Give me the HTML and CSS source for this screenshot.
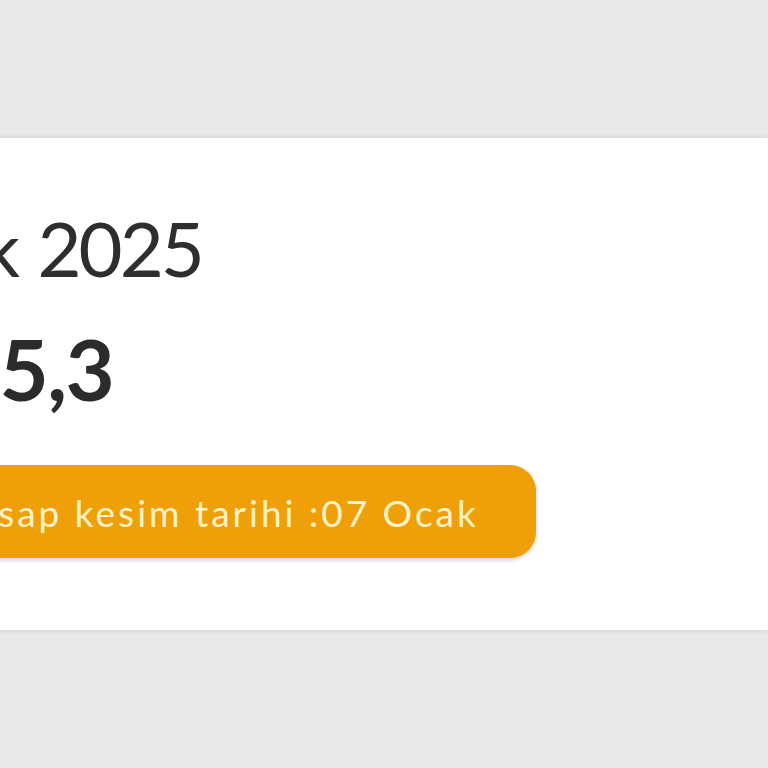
FILE: index.html
```html
<!DOCTYPE html>
<html lang="tr">
<head>
<meta charset="utf-8">
<link rel="stylesheet" href="styles.css">
</head>
<body>
  <div class="page">
    <section class="card">
      <div class="period">Ocak 2025</div>
      <div class="amount">1255,3</div>
      <div class="badge">Hesap kesim tarihi :07 Ocak</div>
    </section>
  </div>
</body>
</html>
```

FILE: styles.css
```css
html, body {
  margin: 0;
  padding: 0;
  background: #e9e9e9;
  font-family: "Lato", "Noto Sans", sans-serif;
  overflow: hidden;
}
.page {
  width: 768px;
  height: 768px;
  padding-top: 138px;
  box-sizing: border-box;
}
.card {
  margin-left: -144px;
  width: 912px;
  height: 492px;
  background: #ffffff;
  box-shadow: 0 0 6px rgba(0,0,0,0.12);
  box-sizing: border-box;
  padding-top: 72px;
  display: flex;
  flex-direction: column;
  align-items: flex-start;
}
.period {
  font-size: 76px;
  line-height: 76px;
  color: #2e2e2e;
  font-weight: 400;
  letter-spacing: -3px;
  word-spacing: 4px;
}
.amount {
  margin-top: 39px;
  margin-left: 0;
  font-size: 85px;
  line-height: 86px;
  color: #2b2b2b;
  font-weight: 700;
  letter-spacing: -1.5px;
}
.badge {
  margin-top: 54px;
  height: 93px;
  box-sizing: border-box;
  padding: 2px 57px 0 89px;
  display: flex;
  align-items: center;
  background: #ef9f07;
  color: #fff3c8;
  font-size: 37px;
  letter-spacing: 3px;
  border-radius: 0 26px 26px 0;
  box-shadow: 0 2px 4px rgba(0,0,0,0.18);
}
```
